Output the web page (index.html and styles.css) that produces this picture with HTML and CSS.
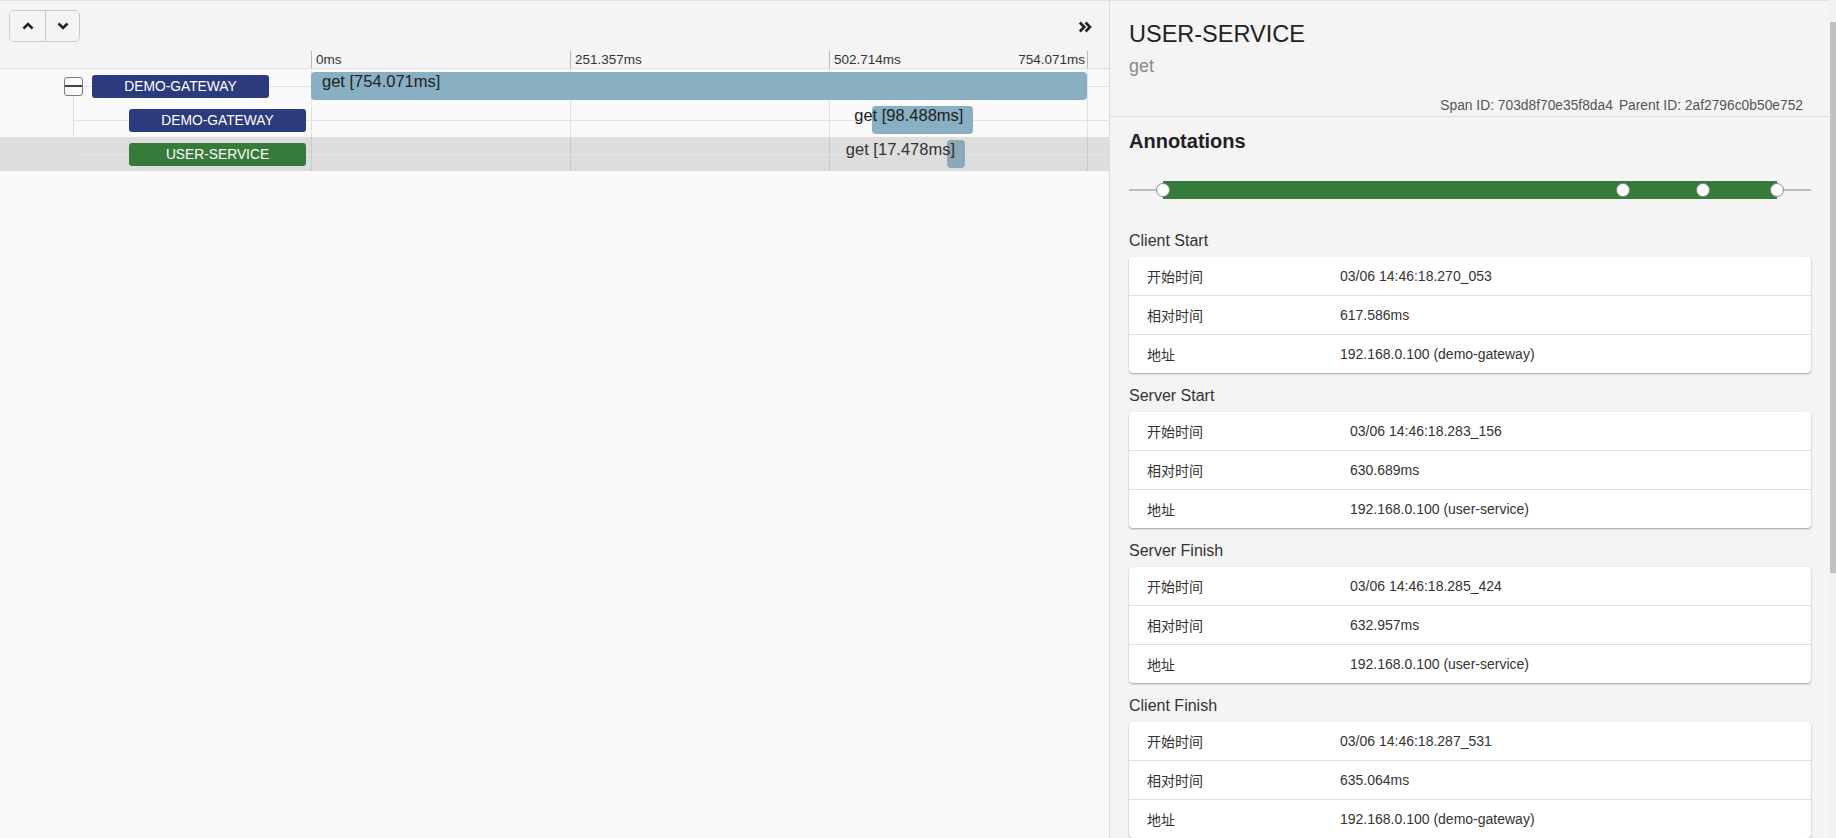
FILE: index.html
```html
<!DOCTYPE html>
<html lang="zh">
<head>
<meta charset="utf-8">
<title>Trace</title>
<link rel="stylesheet" href="styles.css">
</head>
<body>
<section class="trace">
  <header class="trace-head">
    <div class="toolbar">
      <div class="btn-group">
        <button class="btn" type="button" aria-label="up">
          <svg width="12" height="8" viewBox="0 0 12 8"><polyline points="1.5,6.5 6,2 10.5,6.5" fill="none" stroke="#222" stroke-width="2.6"/></svg>
        </button>
        <button class="btn" type="button" aria-label="down">
          <svg width="12" height="8" viewBox="0 0 12 8"><polyline points="1.5,1.5 6,6 10.5,1.5" fill="none" stroke="#222" stroke-width="2.6"/></svg>
        </button>
      </div>
      <button class="collapse" type="button" aria-label="collapse">
        <svg width="14" height="12" viewBox="0 0 14 12"><path d="M1.8 1.5 L6.2 6 L1.8 10.5 M7.6 1.5 L12 6 L7.6 10.5" fill="none" stroke="#222" stroke-width="2.6"/></svg>
      </button>
    </div>
    <div class="axis">
      <div class="axis-spacer"></div>
      <div class="axis-scale">
        <div class="tick">0ms</div>
        <div class="tick">251.357ms</div>
        <div class="tick tick--last"><span>502.714ms</span><span>754.071ms</span></div>
      </div>
    </div>
  </header>

  <div class="rows">
    <div class="row row--root">
      <div class="row-label">
        <span class="toggle"></span>
        <span class="svc svc--gw">DEMO-GATEWAY</span>
      </div>
      <div class="row-time">
        <div class="bar" style="left:0%;width:100%"><span class="bar-label bar-label--in">get [754.071ms]</span></div>
      </div>
    </div>
    <div class="row row--child">
      <div class="row-label">
        <span class="svc svc--gw">DEMO-GATEWAY</span>
      </div>
      <div class="row-time">
        <div class="bar" style="left:72.3%;width:13.06%"><span class="bar-label bar-label--out">get [98.488ms]</span></div>
      </div>
    </div>
    <div class="row row--last is-selected">
      <div class="row-label">
        <span class="svc svc--user">USER-SERVICE</span>
      </div>
      <div class="row-time">
        <div class="bar" style="left:81.96%;width:2.32%"><span class="bar-label bar-label--out">get [17.478ms]</span></div>
      </div>
    </div>
  </div>
</section>

<aside class="detail">
  <div class="detail-body">
    <div class="detail-head">
      <div class="service-name">USER-SERVICE</div>
      <div class="span-name">get</div>
      <div class="span-ids"><span>Span ID: 703d8f70e35f8da4</span><span class="parent-id">Parent ID: 2af2796c0b50e752</span></div>
    </div>

    <div class="detail-content">
      <h2 class="anno-title">Annotations</h2>
      <div class="anno-line">
        <div class="anno-range" style="left:4.985%;width:90.03%"></div>
        <span class="anno-dot" style="left:4.985%"></span>
        <span class="anno-dot" style="left:72.43%"></span>
        <span class="anno-dot" style="left:84.16%"></span>
        <span class="anno-dot" style="left:95.01%"></span>
      </div>

      <h3 class="section-title section-title--first">Client Start</h3>
      <div class="kv">
        <div class="kv-row"><span>开始时间</span><span>03/06 14:46:18.270_053</span></div>
        <div class="kv-row"><span>相对时间</span><span>617.586ms</span></div>
        <div class="kv-row"><span>地址</span><span>192.168.0.100 (demo-gateway)</span></div>
      </div>

      <h3 class="section-title">Server Start</h3>
      <div class="kv kv--wide">
        <div class="kv-row"><span>开始时间</span><span>03/06 14:46:18.283_156</span></div>
        <div class="kv-row"><span>相对时间</span><span>630.689ms</span></div>
        <div class="kv-row"><span>地址</span><span>192.168.0.100 (user-service)</span></div>
      </div>

      <h3 class="section-title">Server Finish</h3>
      <div class="kv kv--wide">
        <div class="kv-row"><span>开始时间</span><span>03/06 14:46:18.285_424</span></div>
        <div class="kv-row"><span>相对时间</span><span>632.957ms</span></div>
        <div class="kv-row"><span>地址</span><span>192.168.0.100 (user-service)</span></div>
      </div>

      <h3 class="section-title">Client Finish</h3>
      <div class="kv">
        <div class="kv-row"><span>开始时间</span><span>03/06 14:46:18.287_531</span></div>
        <div class="kv-row"><span>相对时间</span><span>635.064ms</span></div>
        <div class="kv-row"><span>地址</span><span>192.168.0.100 (demo-gateway)</span></div>
      </div>
    </div>
  </div>
  <div class="scrollbar"><div class="scrollbar-thumb"></div></div>
</aside>
</body>
</html>
```

FILE: styles.css
```css
html, body {
  margin: 0;
  padding: 0;
}

body {
  width: 1836px;
  height: 838px;
  overflow: hidden;
  display: flex;
  font-family: "Liberation Sans", Arial, "Noto Sans CJK SC", sans-serif;
  color: #333;
  background: #fafafa;
}

/* ---------- left: trace timeline ---------- */
.trace {
  width: 1109px;
  flex: none;
  border-right: 1px solid #dcdcdc;
  background: #fafafa;
  display: flex;
  flex-direction: column;
}

.trace-head {
  height: 67px;
  border-top: 1px solid #e2e2e2;
  border-bottom: 1px solid #dcdcdc;
  background: #f4f4f4;
  display: flex;
  flex-direction: column;
}

.toolbar {
  height: 50px;
  box-sizing: border-box;
  padding: 9px 17px 0 9px;
  display: flex;
  justify-content: space-between;
  align-items: flex-start;
}

.btn-group {
  display: flex;
  border: 1px solid #c9c9c9;
  border-radius: 5px;
  overflow: hidden;
}

.btn {
  width: 35px;
  height: 30px;
  margin: 0;
  padding: 0;
  border: 0;
  background: #f4f4f4;
  display: flex;
  align-items: center;
  justify-content: center;
}

.btn + .btn {
  border-left: 1px solid #c9c9c9;
  width: 34px;
}

.collapse {
  margin: 11px 0 0;
  padding: 0;
  border: 0;
  background: transparent;
  display: flex;
}

.axis {
  height: 17px;
  display: flex;
}

.axis-spacer {
  width: 311px;
  flex: none;
}

.axis-scale {
  width: 777px;
  display: grid;
  grid-template-columns: 259px 259px 259px;
}

.tick {
  border-left: 1px solid #b8b8b8;
  padding-left: 4px;
  font-size: 13.5px;
  line-height: 17px;
  color: #333;
  white-space: nowrap;
}

.tick--last {
  border-right: 1px solid #b8b8b8;
  padding-right: 2px;
  display: flex;
  justify-content: space-between;
}

.rows {
  background-image:
    linear-gradient(#e2e2e2, #e2e2e2),
    linear-gradient(#e2e2e2, #e2e2e2),
    linear-gradient(#e2e2e2, #e2e2e2),
    linear-gradient(#e2e2e2, #e2e2e2);
  background-size: 1px 100%;
  background-position: 311px 0, 570px 0, 829px 0, 1087px 0;
  background-repeat: no-repeat;
}

.row {
  height: 34px;
  display: flex;
  align-items: center;
  background-repeat: no-repeat;
}

.row--root {
  background-image:
    linear-gradient(#e3e3e3, #e3e3e3),
    linear-gradient(#dcdcdc, #dcdcdc);
  background-size: calc(100% - 83px) 1px, 1px 8px;
  background-position: right 50%, 73px 100%;
}

.row--child {
  background-image:
    linear-gradient(#e3e3e3, #e3e3e3),
    linear-gradient(#dcdcdc, #dcdcdc);
  background-size: calc(100% - 74px) 1px, 1px 100%;
  background-position: right 50%, 73px 0;
}

.row--last {
  background-image:
    linear-gradient(#e3e3e3, #e3e3e3),
    linear-gradient(#dcdcdc, #dcdcdc);
  background-size: calc(100% - 74px) 1px, 1px 50%;
  background-position: right 50%, 73px 0;
}

.row.is-selected {
  background-color: rgba(0, 0, 0, 0.115);
}

.row-label {
  width: 311px;
  height: 100%;
  flex: none;
  box-sizing: border-box;
  display: flex;
  align-items: center;
}

.row--root .row-label {
  padding-left: 64px;
  gap: 9px;
}

.row--child .row-label,
.row--last .row-label {
  padding-left: 129px;
}

.toggle {
  width: 19px;
  height: 19px;
  box-sizing: border-box;
  border: 1px solid #7c7c7c;
  border-radius: 3px;
  background: #fafafa linear-gradient(#444, #444) center / 100% 2px no-repeat;
}

.svc {
  width: 177px;
  height: 23px;
  border-radius: 3px;
  color: #fff;
  font-size: 13.8px;
  line-height: 23px;
  text-align: center;
}

.svc--gw {
  background: #2c3a7e;
}

.svc--user {
  background: #367b3a;
}

.row-time {
  width: 776px;
  height: 100%;
  flex: none;
  position: relative;
}

.bar {
  position: absolute;
  top: 3px;
  height: 28px;
  border-radius: 4px;
  background: #88afc2;
}

.is-selected .bar {
  background: #8ba9b6;
}

.bar-label {
  position: absolute;
  top: 0;
  white-space: nowrap;
  font-size: 16.5px;
  line-height: 18px;
  color: #222;
}

.is-selected .bar-label {
  color: #333;
}

.bar-label--in {
  left: 11px;
}

.bar-label--out {
  right: 10px;
}

/* ---------- right: span detail ---------- */
.detail {
  flex: 1;
  display: flex;
  background: #f4f4f4;
}

.detail-body {
  flex: 1;
  min-width: 0;
  border-top: 1px solid #e2e2e2;
}

.detail-head {
  padding: 19px 27px 2px 19px;
  border-bottom: 1px solid #dcdcdc;
}

.service-name {
  font-size: 23.5px;
  line-height: 28px;
  color: #222;
}

.span-name {
  margin-top: 7px;
  font-size: 18px;
  line-height: 22px;
  color: #8a8a8a;
}

.span-ids {
  margin-top: 21px;
  font-size: 13.8px;
  line-height: 16px;
  color: #555;
  text-align: right;
}

.parent-id {
  margin-left: 6px;
}

.detail-content {
  padding: 0 19px;
}

.anno-title {
  margin: 12px 0 0;
  font-size: 20px;
  line-height: 24px;
  font-weight: bold;
  color: #222;
}

.anno-line {
  position: relative;
  height: 18px;
  margin-top: 28px;
  background: linear-gradient(#bdbdbd, #bdbdbd) center / 100% 2px no-repeat;
}

.anno-range {
  position: absolute;
  top: 0;
  bottom: 0;
  background: #367b3a;
}

.anno-dot {
  position: absolute;
  top: 2px;
  width: 14px;
  height: 14px;
  margin-left: -7px;
  box-sizing: border-box;
  border: 1px solid #8a8a8a;
  border-radius: 50%;
  background: #fff;
}

.section-title {
  margin: 13px 0 6px;
  font-size: 16px;
  line-height: 20px;
  font-weight: normal;
  color: #333;
}

.section-title--first {
  margin-top: 32px;
}

.kv {
  background: #fff;
  border-radius: 4px;
  box-shadow: 0 1px 2px rgba(0, 0, 0, 0.35);
}

.kv-row {
  height: 38px;
  padding-left: 18px;
  display: grid;
  grid-template-columns: 193px 1fr;
  align-items: center;
  font-size: 14px;
  color: #333;
}

.kv-row + .kv-row {
  border-top: 1px solid #e0e0e0;
}

.kv--wide .kv-row {
  grid-template-columns: 203px 1fr;
}

.scrollbar {
  width: 6px;
  flex: none;
  background: #f1f1f1;
  padding-top: 22px;
  box-sizing: border-box;
}

.scrollbar-thumb {
  height: 551px;
  background: #c1c1c1;
}
```
